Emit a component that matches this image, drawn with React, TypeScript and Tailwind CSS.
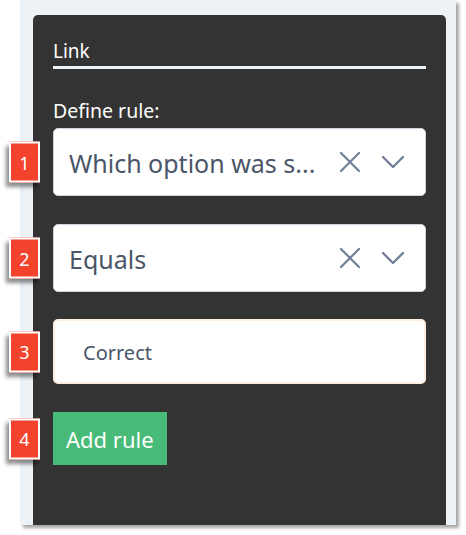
import React from 'react';

const XIcon = () => (
  <svg width="22" height="22" viewBox="0 0 22 22" fill="none" stroke="#718096" strokeWidth="2.2" strokeLinecap="round">
    <path d="M2 2 L20 20 M20 2 L2 20" />
  </svg>
);

const Chevron = () => (
  <svg width="24" height="14" viewBox="0 0 24 14" fill="none" stroke="#718096" strokeWidth="2.4" strokeLinecap="round" strokeLinejoin="round">
    <path d="M2 2 L12 12 L22 2" />
  </svg>
);

// numbered callout that sits over the left edge of a row
const Badge = ({ n }: { n: number }) => (
  <div className="absolute left-[-44px] top-1/2 -translate-y-1/2 w-[31px] h-[41px] bg-[#f4432c] border-2 border-white shadow-[-3px_4px_4px_rgba(0,0,0,0.45)] flex items-center justify-center text-white text-[18px] leading-none">
    {n}
  </div>
);

const SelectBox = ({ value, n }: { value: string; n: number }) => (
  <div className="relative">
    <Badge n={n} />
    <div className="h-[68px] bg-white rounded-[5px] border border-[#cbd5e0] flex items-center pl-[15px] pr-[20px]">
      <span className="flex-1 min-w-0 whitespace-nowrap pt-[3px] text-[25px] text-[#4a5568]">{value}</span>
      <div className="flex items-center gap-[20px] ml-[10px]">
        <XIcon />
        <Chevron />
      </div>
    </div>
  </div>
);

const App = () => {
  return (
    <div className="w-[466px] h-[535px] bg-white pl-[20px] font-['Noto_Sans',sans-serif]">
      <div className="w-[436px] h-[525px] bg-[#edf2f7] pt-[15px] pl-[13px] pr-[10px] shadow-[3px_3px_3px_rgba(0,0,0,0.35)]">
        <div className="h-full bg-[#333333] rounded-t-[5px] px-[20px] pt-[23px]">
          <div className="border-b-[3px] border-[#edf2f7] pb-[2px] text-[19px] leading-[26px] text-white">
            Link
          </div>

          <div className="mt-[29px] text-[19.5px] leading-[25px] text-white">Define rule:</div>

          <div className="mt-[5px] flex flex-col gap-[28px]">
            <SelectBox n={1} value="Which option was s..." />
            <SelectBox n={2} value="Equals" />

            <div className="relative -mt-[1px]">
              <Badge n={3} />
              <div className="h-[65px] bg-white rounded-[5px] border-2 border-[#fdeee2] flex items-center pl-[28px] pt-[2px] text-[20px] text-[#4a5568]">
                Correct
              </div>
            </div>

            <div className="relative">
              <Badge n={4} />
              <button className="h-[53px] px-[13px] bg-[#48bb78] text-white text-[22px] leading-none">
                Add rule
              </button>
            </div>
          </div>
        </div>
      </div>
    </div>
  );
};

export default App;
